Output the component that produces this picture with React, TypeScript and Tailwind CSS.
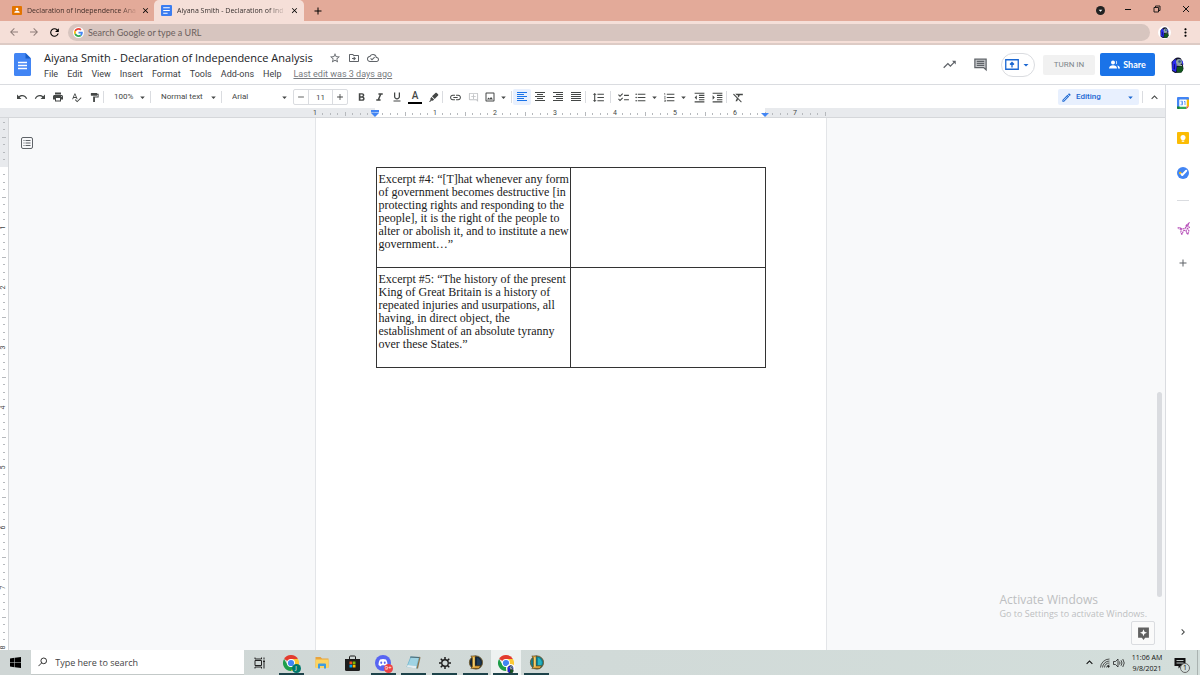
import React from "react";
import clsx from "clsx";
import {
  MdAdd,
  MdArrowBack,
  MdArrowDropDown,
  MdArrowForward,
  MdChecklist,
  MdChevronRight,
  MdClose,
  MdFormatBold,
  MdFormatClear,
  MdFormatIndentDecrease,
  MdFormatIndentIncrease,
  MdFormatItalic,
  MdFormatLineSpacing,
  MdFormatListBulleted,
  MdFormatListNumbered,
  MdFormatPaint,
  MdFormatUnderlined,
  MdKeyboardArrowUp,
  MdLink,
  MdMoreVert,
  MdOutlineAddComment,
  MdOutlineCloudDone,
  MdOutlineDriveFileMove,
  MdOutlineEdit,
  MdOutlineImage,
  MdPrint,
  MdRedo,
  MdRefresh,
  MdRemove,
  MdSpellcheck,
  MdStarBorder,
  MdTrendingUp,
  MdUndo,
} from "react-icons/md";

const menus = ["File", "Edit", "View", "Insert", "Format", "Tools", "Add-ons", "Help"];

/* ---------- drawings ---------- */

const ClassroomIcon = () => (
  <svg viewBox="0 0 20 18" className="h-[9px] w-[10px] shrink-0">
    <rect width="20" height="18" rx="2" fill="#e37400" />
    <circle cx="10" cy="6" r="2.6" fill="#fff" />
    <path d="M4.500 13.500c0-3 3-4 5.500-4s5.500 1 5.500 4z" fill="#fff" />
  </svg>
);

const DocsFavicon = () => (
  <svg viewBox="0 0 20 20" className="size-[11px] shrink-0">
    <rect width="20" height="20" rx="2" fill="#3b7df0" />
    <path d="M4 5h12M4 10h12M4 15h8" stroke="#fff" strokeWidth="2.200" />
  </svg>
);

const GoogleG = () => (
  <svg viewBox="0 0 48 48" className="size-[9px]">
    <path fill="#EA4335" d="M24 9.500c3.540 0 6.710 1.220 9.210 3.600l6.850-6.850C35.900 2.380 30.470 0 24 0 14.620 0 6.510 5.380 2.560 13.220l7.980 6.190C12.430 13.720 17.740 9.500 24 9.500z" />
    <path fill="#4285F4" d="M46.980 24.550c0-1.570-.15-3.090-.38-4.550H24v9.020h12.940c-.58 2.960-2.260 5.480-4.780 7.180l7.730 6c4.510-4.180 7.090-10.360 7.090-17.650z" />
    <path fill="#FBBC05" d="M10.530 28.590c-.48-1.450-.76-2.990-.76-4.590s.27-3.140.76-4.590l-7.980-6.190C.92 16.460 0 20.120 0 24c0 3.880.92 7.540 2.560 10.780l7.970-6.190z" />
    <path fill="#34A853" d="M24 48c6.480 0 11.930-2.130 15.890-5.810l-7.730-6c-2.150 1.450-4.920 2.300-8.160 2.300-6.260 0-11.570-4.220-13.470-9.910l-7.980 6.190C6.510 42.620 14.620 48 24 48z" />
  </svg>
);

const DocsLogo = () => (
  <svg viewBox="0 0 34 46" className="h-[23px] w-[17px] shrink-0">
    <path d="M3 0h20l11 11v32a3 3 0 0 1-3 3H3a3 3 0 0 1-3-3V3a3 3 0 0 1 3-3z" fill="#4285f4" />
    <path d="M23 0l11 11H23z" fill="#1a5fc8" />
    <path d="M8 19h18M8 25h18M8 31h18" stroke="#fff" strokeWidth="2.600" />
  </svg>
);

const Backpack = ({ className }: { className?: string }) => (
  <svg viewBox="0 0 26 32" className={className}>
    <path d="M8 3c3-3 9-3 12 0l3 7 2 14-4 7-13 1-6-4-1-18z" fill="#12122e" />
    <path d="M3 9l6-5 3 9-2 17-8-4z" fill="#2b2bf0" />
    <path d="M6 15l2-2v12l-3-1z" fill="#101080" />
    <path d="M12 20l11-2 1 9-4 4-8 0z" fill="#14561d" />
    <circle cx="16" cy="10" r="6" fill="#8fa3a6" />
    <circle cx="17" cy="9" r="2.500" fill="#2d5a86" />
    <path d="M11 16l11 1" stroke="#b9c6c2" strokeWidth="2" />
    <path d="M22 7l2 8" stroke="#2b2bf0" strokeWidth="2" />
  </svg>
);

const CommentIcon = () => (
  <svg viewBox="0 0 24 24" className="size-[15px]" fill="#c9cbce" stroke="#5f6368" strokeWidth="2">
    <path d="M3 3.500h18v17l-4-3.500H3z" />
    <path d="M6 7h12M6 10.200h12M6 13.400h12" strokeWidth="1.800" />
  </svg>
);

const HighlightPen = () => (
  <svg viewBox="0 0 24 24" className="size-[11px]" fill="#444746">
    <path d="M19 2l3 3c.8.800.8 2 0 2.800l-7.500 7.500-5.800-5.800L16.200 2c.800-.800 2-.800 2.800 0z" />
    <path d="M7.500 10.700l5.800 5.800-2.800 2.500-2.500-.500L5 21.500H2l3.500-4-.500-3z" />
  </svg>
);

// bars are [x, width] pairs, one per text line
const AlignIcon = ({ bars }: { bars: number[][] }) => (
  <svg viewBox="0 0 10 10" className="size-2.5" fill="currentColor">
    {bars.map(([x, w], i) => (
      <rect key={i} x={x} y={i * 2} width={w} height="1" />
    ))}
  </svg>
);

const CalendarIcon = () => (
  <svg viewBox="0 0 24 24" className="size-3">
    <path d="M2 0h20a2 2 0 0 1 2 2v4H0V2a2 2 0 0 1 2-2z" fill="#4285f4" />
    <path d="M0 5h5v19H2a2 2 0 0 1-2-2z" fill="#4285f4" />
    <path d="M19 5h5v14h-5z" fill="#fbbc04" />
    <path d="M4 19h15v5H4z" fill="#34a853" />
    <path d="M0 19h5v5H2a2 2 0 0 1-2-2z" fill="#188038" />
    <path d="M19 19h5l-5 5z" fill="#ea4335" />
    <path d="M5 5h14v14H5z" fill="#fff" />
    <path d="M7 8.500h4v7H7M8 12h3M14 9.500l2-1v7.500" fill="none" stroke="#4285f4" strokeWidth="1.600" />
  </svg>
);

const KeepIcon = () => (
  <svg viewBox="0 0 24 24" className="size-3">
    <rect width="24" height="24" rx="2" fill="#fbbc04" />
    <circle cx="12" cy="11" r="5" fill="#fff" />
    <path d="M9.500 14h5v3h-5zM9.500 18h5v1.500h-5z" fill="#fff" />
  </svg>
);

const TasksIcon = () => (
  <svg viewBox="0 0 24 24" className="size-3">
    <circle cx="12" cy="12" r="12" fill="#4285f4" />
    <path d="M10.500 16l8-8.500" stroke="#fff" strokeWidth="4" strokeLinecap="round" />
    <circle cx="6.500" cy="12" r="2.500" fill="#fbbc04" />
    <path d="M8.500 14l2 2" stroke="#fff" strokeWidth="3.500" strokeLinecap="round" />
  </svg>
);

const AddonIcon = () => (
  <svg viewBox="0 0 24 24" className="size-[13px]" fill="none" stroke="#b750b9" strokeWidth="2">
    <path d="M1 11l4-1 4 3 6-1 2-6 5-4-2 5 3 3-4 2 3 4-2 7-3-4 0-4-5 1-3 7-2-4 1-5-5-2M22 2l-5 8" strokeDasharray="4 1" />
  </svg>
);

const ChromeIcon = () => (
  <svg viewBox="0 0 32 32" className="size-4">
    <path d="M16 16L2.140 8A16 16 0 0 1 29.860 8z" fill="#e33b2e" />
    <path d="M16 16V8h13.860A16 16 0 0 1 16 32z" fill="#fcc934" />
    <path d="M16 16l6.900 4L16 32A16 16 0 0 1 2.140 8l7 12z" fill="#1e9e4a" />
    <circle cx="16" cy="16" r="8" fill="#fff" />
    <circle cx="16" cy="16" r="6.200" fill="#4285f4" />
  </svg>
);

const FolderIcon = () => (
  <svg viewBox="0 0 28 26" className="h-[13px] w-[14px]">
    <path d="M1 2h10l3 3h13v18H1z" fill="#e8a33d" />
    <path d="M1 7h26v17H1z" fill="#fcd462" />
    <path d="M6 25v-8a2 2 0 0 1 2-2h12a2 2 0 0 1 2 2v8h-4v-5h-8v5z" fill="#3f9be0" />
  </svg>
);

const StoreIcon = () => (
  <svg viewBox="0 0 30 32" className="h-4 w-[15px]">
    <path d="M9 9V4a2 2 0 0 1 2-2h8a2 2 0 0 1 2 2v5" fill="none" stroke="#1d1d1d" strokeWidth="2" />
    <path d="M0 8h30v21a3 3 0 0 1-3 3H3a3 3 0 0 1-3-3z" fill="#1d1d1d" />
    <path d="M9 13h5.500v5.500H9z" fill="#f25022" />
    <path d="M15.500 13H21v5.500h-5.500z" fill="#7fba00" />
    <path d="M9 19.500h5.500V25H9z" fill="#00a4ef" />
    <path d="M15.500 19.500H21V25h-5.500z" fill="#ffb900" />
  </svg>
);

const DiscordIcon = () => (
  <svg viewBox="0 0 32 32" className="size-4">
    <circle cx="16" cy="16" r="16" fill="#5865f2" />
    <path d="M10 9c4-1.500 8-1.500 12 0 2 3 3 7 3 11-2 2-4 2.500-5 2.500l-1-2h-6l-1 2c-1 0-3-.5-5-2.500 0-4 1-8 3-11z" fill="#fff" />
    <ellipse cx="12.500" cy="15.500" rx="2" ry="2.300" fill="#5865f2" />
    <ellipse cx="19.500" cy="15.500" rx="2" ry="2.300" fill="#5865f2" />
  </svg>
);

const NotepadIcon = () => (
  <svg viewBox="0 0 30 30" className="size-[15px]">
    <path d="M9 3l18 1-5 23-21-3z" fill="#6fb5cd" />
    <path d="M10 5l15 1-4 16-17-2z" fill="#9fd3e3" />
    <path d="M3 20l18 2-1 5-18-3z" fill="#e8eef0" />
    <path d="M27 3l2 2-5 22-3 0z" fill="#8a7550" />
    <path d="M9 3l18 1v2L8 5z" fill="#4b6670" />
  </svg>
);

const GearIcon = () => (
  <svg viewBox="0 0 24 24" className="size-3" fill="none" stroke="#1c1c1c">
    <circle cx="12" cy="12" r="6.500" strokeWidth="2.600" />
    <path d="M12 0v5M12 19v5M0 12h5M19 12h5M3.500 3.500l3.500 3.500M17 17l3.500 3.500M20.500 3.500L17 7M7 17l-3.500 3.500" strokeWidth="3" />
  </svg>
);

const LeagueIcon = ({ dark }: { dark?: boolean }) => (
  <svg viewBox="0 0 32 32" className="size-[15px]">
    <circle cx="17" cy="16" r="14" fill={dark ? "#12263a" : "#0f7f93"} stroke="#6e5a2c" strokeWidth="2" />
    <path d="M19 6a11 11 0 0 1 7 16h-7z" fill={dark ? "#1d3b55" : "#24b3c0"} />
    <path d="M6 2h11l-2 3v18h12l-4 6H6l3-4V6z" fill="#d9a03a" stroke="#3b2a0a" />
    <path d="M11 5h3v20h-3z" fill="#f5d77a" />
  </svg>
);

const TaskViewIcon = () => (
  <svg viewBox="0 0 24 24" className="size-3" fill="none" stroke="#222" strokeWidth="2">
    <path d="M2 7h13v10H2zM2 1v3h13V1M2 23v-3h13v3M20 1v4M20 12v11" />
    <path d="M18 7h4v4h-4z" fill="#222" stroke="none" />
  </svg>
);

/* ---------- browser window ---------- */

type TabProps = { icon: React.ReactNode; title: string; active?: boolean };

const BrowserTab = ({ icon, title, active }: TabProps) => (
  <div
    className={clsx(
      "flex items-center gap-[5px] pr-[5px]",
      active ? "w-[150px] rounded-t-[5px] bg-[#f5dfd8] pl-[7px]" : "w-[154px] pl-3"
    )}
  >
    {icon}
    <span
      className={clsx(
        "whitespace-nowrap bg-linear-to-r from-85% to-100% bg-clip-text font-['Open_Sans',sans-serif] text-[7px] leading-4 text-transparent",
        active ? "from-[#2f2928] to-[#e5cfc8]" : "from-[#3d2a25] to-[#d39a89]"
      )}
    >
      {title}
    </span>
    <button aria-label="Close tab" className="ml-auto text-black">
      <MdClose size={9} />
    </button>
  </div>
);

const BrowserChrome = () => (
  <div className="font-[Lato,sans-serif]">
    <div className="flex h-[21px] bg-[#e3aa99]">
      <BrowserTab icon={<ClassroomIcon />} title="Declaration of Independence Ana" />
      <BrowserTab icon={<DocsFavicon />} title="Aiyana Smith - Declaration of Ind" active />
      <button aria-label="New tab" className="px-2 text-black">
        <MdAdd size={12} />
      </button>
      <div className="ml-auto flex items-center">
        <button aria-label="Tab search" className="mr-2 flex size-[9px] items-center justify-center rounded-full bg-[#222] text-white">
          <MdArrowDropDown size={9} />
        </button>
        <button aria-label="Minimize" className="flex w-[29px] justify-center pb-[3px]">
          <svg viewBox="0 0 8 8" className="size-2" stroke="#111">
            <path d="M1 4.500h6" />
          </svg>
        </button>
        <button aria-label="Restore" className="flex w-[29px] justify-center pb-[3px]">
          <svg viewBox="0 0 16 16" className="size-2" fill="none" stroke="#111" strokeWidth="1.800">
            <path d="M2 5h9v9H2zM5 5V2h9v9h-3" />
          </svg>
        </button>
        <button aria-label="Close" className="flex w-[29px] justify-center pb-[3px]">
          <svg viewBox="0 0 8 8" className="size-2" stroke="#111">
            <path d="M1 1l6 6M7 1L1 7" />
          </svg>
        </button>
      </div>
    </div>
    <div className="flex h-6 items-center border-b-2 border-[#ddcbc5] bg-[#f5dfd8] px-2">
      <button aria-label="Back" className="w-5 text-[#8f7f7a]">
        <MdArrowBack size={12} />
      </button>
      <button aria-label="Forward" className="w-5 text-[#8f7f7a]">
        <MdArrowForward size={12} />
      </button>
      <button aria-label="Reload" className="w-5 text-black">
        <MdRefresh size={13} />
      </button>
      <label className="flex h-[17px] flex-1 items-center gap-1 rounded-full bg-[#d7c5bf] pl-[5px]">
        <span className="flex size-[11px] items-center justify-center rounded-full bg-white">
          <GoogleG />
        </span>
        <input
          type="text"
          aria-label="Address"
          placeholder="Search Google or type a URL"
          className="flex-1 bg-transparent pt-px text-[9px] outline-none placeholder:text-[#6b605d]"
        />
      </label>
      <button aria-label="Profile" className="ml-2 flex size-[13px] items-center justify-center rounded-full bg-white">
        <Backpack className="h-[11px] w-[9px]" />
      </button>
      <button aria-label="Chrome menu" className="ml-2 text-black">
        <MdMoreVert size={13} />
      </button>
    </div>
  </div>
);

/* ---------- docs header and toolbar ---------- */

const DocsHeader = () => (
  <header className="flex h-10 items-center border-b border-[#dadce0] bg-white pl-3.5 pr-4 text-[#3c4043]">
    <DocsLogo />
    <div className="ml-[13px] flex flex-col pt-[3px]">
      <div className="flex items-center">
        <h1 className="whitespace-nowrap font-['Open_Sans',sans-serif] text-[11px] leading-4 text-[#202124]">
          Aiyana Smith - Declaration of Independence Analysis
        </h1>
        <div className="ml-4 flex gap-[7px] text-[#5f6368]">
          <button aria-label="Star"><MdStarBorder size={12} /></button>
          <button aria-label="Move"><MdOutlineDriveFileMove size={12} /></button>
          <button aria-label="Document status"><MdOutlineCloudDone size={12} /></button>
        </div>
      </div>
      <nav className="flex gap-[9px] whitespace-nowrap text-[9px] leading-4">
        {menus.map((m) => (
          <button key={m}>{m}</button>
        ))}
        <a href="#history" className="ml-[3px] text-[#777b80] underline">
          Last edit was 3 days ago
        </a>
      </nav>
    </div>
    <div className="ml-auto flex items-center">
      <button aria-label="Activity" className="text-[#5f6368]">
        <MdTrendingUp size={15} />
      </button>
      <button aria-label="Comments" className="ml-4">
        <CommentIcon />
      </button>
      <button aria-label="Present" className="ml-[13px] flex h-6 w-[34px] items-center justify-center gap-px rounded-full border border-[#dadce0] text-[#1a67d2]">
        <svg viewBox="0 0 28 22" className="h-[11px] w-[14px]" fill="none" stroke="currentColor" strokeWidth="2.600">
          <path d="M1.500 1.500h25v19h-25zM14 17V8M10 11l4-4 4 4" />
        </svg>
        <MdArrowDropDown size={12} />
      </button>
      <button className="ml-2 h-5 w-[52px] rounded-xs bg-[#f1f1f1] text-[8px] text-[#80868b]">TURN IN</button>
      <button className="ml-[5px] flex h-[23px] w-[55px] items-center justify-center gap-[3px] rounded-xs bg-[#1a73e8] font-[Lato,sans-serif] text-[9px] font-bold text-white">
        <svg viewBox="0 0 22 18" className="h-[9px] w-[11px]" fill="#fff">
          <circle cx="8" cy="5" r="4" />
          <path d="M0 17c0-5 4-6.500 8-6.500s8 1.500 8 6.500z" />
          <path d="M13.500 1.200a4 4 0 0 1 0 7.600c1.500-2.400 1.500-5.200 0-7.600zM16 11c3 .5 6 2 6 6h-4c0-2.500-.5-4.500-2-6z" />
        </svg>
        Share
      </button>
      <button aria-label="Account" className="ml-4">
        <Backpack className="h-4 w-[13px]" />
      </button>
    </div>
  </header>
);

type ToolProps = { label: string; active?: boolean; caret?: boolean; children: React.ReactNode };

const Tool = ({ label, active, caret, children }: ToolProps) => (
  <button
    aria-label={label}
    className={clsx(
      "flex h-4 items-center justify-center rounded-xs",
      caret ? "w-[29px]" : "w-[18px]",
      active && "bg-[#e8f0fe] text-[#1a73e8]"
    )}
  >
    {children}
    {caret && <MdArrowDropDown size={11} className="ml-0.5" />}
  </button>
);

const Sep = () => <span className="h-3 w-px bg-[#dadce0]" />;

const Picker = ({ label, value, className }: { label: string; value: string; className: string }) => (
  <div className={clsx("relative flex items-center", className)}>
    <select aria-label={label} className="w-full appearance-none bg-transparent pl-2.5 text-[8px] outline-none">
      <option>{value}</option>
    </select>
    <MdArrowDropDown size={11} className="pointer-events-none absolute right-0.5" />
  </div>
);

const Toolbar = () => (
  <div className="flex h-[23px] items-center bg-white pl-[13px] pr-1 pt-px text-[#444746]">
    <Tool label="Undo"><MdUndo size={12} /></Tool>
    <Tool label="Redo"><MdRedo size={12} /></Tool>
    <Tool label="Print"><MdPrint size={12} /></Tool>
    <Tool label="Spelling"><MdSpellcheck size={11} /></Tool>
    <Tool label="Paint format"><MdFormatPaint size={11} /></Tool>
    <Sep />
    <Picker label="Zoom" value="100%" className="w-[46px]" />
    <Sep />
    <Picker label="Styles" value="Normal text" className="w-[70px]" />
    <Sep />
    <Picker label="Font" value="Arial" className="w-[70px]" />
    <div className="mr-1 ml-px flex h-4 items-center rounded-xs border border-[#dadce0]">
      <button aria-label="Decrease font size" className="flex w-3.5 justify-center"><MdRemove size={10} /></button>
      <input
        aria-label="Font size"
        defaultValue="11"
        className="h-3.5 w-[25px] border-x border-[#dadce0] text-center text-[8px] outline-none"
      />
      <button aria-label="Increase font size" className="flex w-3.5 justify-center"><MdAdd size={10} /></button>
    </div>
    <Tool label="Bold"><MdFormatBold size={13} /></Tool>
    <Tool label="Italic"><MdFormatItalic size={13} /></Tool>
    <Tool label="Underline"><MdFormatUnderlined size={12} /></Tool>
    <Tool label="Text color">
      <span className="w-3.5 border-b-2 border-black text-center text-[10px] font-medium leading-3">A</span>
    </Tool>
    <Tool label="Highlight color"><HighlightPen /></Tool>
    <Sep />
    <span className="w-[3px]" />
    <Tool label="Insert link"><MdLink size={13} /></Tool>
    <span className="flex text-[#c0c2c5]">
      <Tool label="Add comment"><MdOutlineAddComment size={11} /></Tool>
    </span>
    <Tool label="Insert image" caret><MdOutlineImage size={12} /></Tool>
    <Sep />
    <span className="w-px" />
    <Tool label="Left align" active><AlignIcon bars={[[0, 10], [0, 7], [0, 10], [0, 7], [0, 10]]} /></Tool>
    <Tool label="Center align"><AlignIcon bars={[[0, 10], [2, 6], [0, 10], [2, 6], [0, 10]]} /></Tool>
    <Tool label="Right align"><AlignIcon bars={[[0, 10], [3, 7], [0, 10], [3, 7], [0, 10]]} /></Tool>
    <Tool label="Justify"><AlignIcon bars={[[0, 10], [0, 10], [0, 10], [0, 10], [0, 10]]} /></Tool>
    <Sep />
    <span className="flex px-[3px]">
      <Tool label="Line spacing"><MdFormatLineSpacing size={13} /></Tool>
    </span>
    <Sep />
    <span className="w-[3px]" />
    <Tool label="Checklist"><MdChecklist size={13} /></Tool>
    <Tool label="Bulleted list" caret><MdFormatListBulleted size={13} /></Tool>
    <Tool label="Numbered list" caret><MdFormatListNumbered size={13} /></Tool>
    <Tool label="Decrease indent"><MdFormatIndentDecrease size={13} /></Tool>
    <Tool label="Increase indent"><MdFormatIndentIncrease size={13} /></Tool>
    <Sep />
    <span className="w-0.5" />
    <Tool label="Clear formatting"><MdFormatClear size={13} /></Tool>
    <button className="ml-auto flex h-4 w-[81px] items-center gap-1 rounded-xs bg-[#e8f0fe] px-[3px] text-[8px] font-medium text-[#1a67d2]">
      <MdOutlineEdit size={11} />
      Editing
      <MdArrowDropDown size={11} className="ml-auto" />
    </button>
    <span className="mr-[5px] ml-[3px] h-3 w-px bg-[#dadce0]" />
    <button aria-label="Hide menus"><MdKeyboardArrowUp size={13} /></button>
  </div>
);

/* ---------- rulers ---------- */

const Tick = ({ step, vertical }: { step: number; vertical?: boolean }) => {
  const box = vertical ? "h-0 w-full" : "h-full w-0";
  let mark = <i className={clsx("shrink-0 bg-[#b6b9bd]", vertical ? "h-px w-0.5" : "h-0.5 w-px")} />;
  if (step % 8 === 0) {
    mark = (
      <span className={clsx("text-[7px] leading-none text-[#444746]", vertical && "-rotate-90")}>
        {step === 0 ? "" : Math.abs(step / 8)}
      </span>
    );
  } else if (step % 4 === 0) {
    mark = <i className={clsx("shrink-0 bg-[#b6b9bd]", vertical ? "h-px w-1" : "h-1 w-px")} />;
  }
  return <span className={clsx("flex items-center justify-center", box)}>{mark}</span>;
};

const range = (from: number, to: number) => Array.from({ length: to - from + 1 }, (_, i) => from + i);

const HorizontalRuler = () => (
  <div className="flex h-2.5 justify-center border-b border-[#d5d7da] bg-[#e8eaed] pr-[25px]">
    <div className="relative flex w-[510px] justify-between bg-linear-to-r from-[#e8eaed] from-[60px] via-white via-[60px] to-white pt-0.5">
      <span className="absolute top-0 right-0 h-full w-[60px] bg-[#e8eaed]" />
      {range(-8, 60).map((n) => (
        <span key={n} className="relative flex">
          <Tick step={n} />
        </span>
      ))}
      <svg viewBox="0 0 8 8" className="absolute top-0.5 left-14 size-2" fill="#4285f4">
        <path d="M0 0h8v2.500H0zM0 3h8L4 7z" />
      </svg>
      <svg viewBox="0 0 8 8" className="absolute top-0.5 right-14 size-2" fill="#4285f4">
        <path d="M0 3h8L4 7z" />
      </svg>
    </div>
  </div>
);

const VerticalRuler = () => (
  <div className="relative w-[9px] shrink-0 overflow-hidden border-r border-[#d5d7da] bg-white">
    <div className="absolute top-0 h-[49px] w-full bg-[#e8eaed]" />
    <div className="relative mt-1 flex h-[525px] flex-col justify-between">
      {range(-6, 64).map((n) => (
        <Tick key={n} step={n} vertical />
      ))}
    </div>
  </div>
);

/* ---------- document ---------- */

const excerpts = [
  "Excerpt #4: “[T]hat whenever any form of government becomes destructive [in protecting rights and responding to the people], it is the right of the people to alter or abolish it, and to institute a new government…”",
  "Excerpt #5: “The history of the present King of Great Britain is a history of repeated injuries and usurpations, all having, in direct object, the establishment of an absolute tyranny over these States.”",
];

const Page = () => (
  <div className="w-[512px] border-x border-[#e3e5e8] bg-white px-[60px] pt-[49px] font-['Liberation_Serif',serif]">
    <table className="w-full table-fixed border-collapse text-black">
      <tbody>
        {excerpts.map((text) => (
          <tr key={text} className="h-[100px]">
            <td className="border border-[#333] pt-[5px] pl-0.5 align-top text-[12px] leading-[13px] text-[#222]">{text}</td>
            <td className="border border-[#333]" />
          </tr>
        ))}
      </tbody>
    </table>
  </div>
);

const Canvas = () => (
  <div className="relative flex min-h-0 flex-1 overflow-hidden bg-[#f8f9fa]">
    <VerticalRuler />
    <div className="flex flex-1 justify-center pr-[25px]">
      <Page />
    </div>
    <div className="w-2 pt-[274px]">
      <div className="h-[205px] w-[5px] rounded-full bg-[#dadce0]" />
    </div>
    <button aria-label="Show document outline" className="absolute top-[19px] left-[21px] text-[#5f6368]">
      <svg viewBox="0 0 24 24" className="size-3" fill="none" stroke="currentColor" strokeWidth="2">
        <rect x="1" y="1" width="22" height="22" rx="3" />
        <path d="M5 7h2M9 7h10M5 12h2M9 12h10M5 17h2M9 17h10" />
      </svg>
    </button>
    <div className="absolute right-[18px] bottom-[30px] font-['Open_Sans',sans-serif] whitespace-nowrap text-[#bdbfc1]">
      <p className="text-[12px] leading-4">Activate Windows</p>
      <p className="text-[9px] leading-3">Go to Settings to activate Windows.</p>
    </div>
    <button aria-label="Explore" className="absolute right-2.5 bottom-[5px] flex size-6 items-center justify-center rounded-xs border border-[#dadce0] bg-[#fafafa]">
      <svg viewBox="0 0 24 24" className="size-[13px]">
        <path d="M2 1h20v19h-7l-3 4-3-4H2z" fill="#616161" />
        <path d="M12 4l1.800 4.700L18.500 10.500l-4.700 1.800L12 17l-1.800-4.700-4.700-1.800 4.700-1.800z" fill="#fff" />
      </svg>
    </button>
  </div>
);

const SidePanel = () => (
  <aside className="flex w-[35px] flex-col items-center border-l border-[#dadce0] bg-white pt-3">
    <div className="flex flex-col items-center gap-[23px]">
      <button aria-label="Calendar"><CalendarIcon /></button>
      <button aria-label="Keep"><KeepIcon /></button>
      <button aria-label="Tasks"><TasksIcon /></button>
    </div>
    <hr className="my-[21px] w-3 border-[#dadce0]" />
    <div className="flex flex-col items-center gap-[22px] text-[#5f6368]">
      <button aria-label="Add-on"><AddonIcon /></button>
      <button aria-label="Get add-ons"><MdAdd size={12} /></button>
    </div>
    <button aria-label="Hide side panel" className="mt-auto mb-3 text-[#444746]">
      <MdChevronRight size={12} />
    </button>
  </aside>
);

/* ---------- taskbar ---------- */

const Badge = ({ className, children }: { className: string; children: React.ReactNode }) => (
  <span className={clsx("absolute right-1.5 bottom-0 flex size-[9px] items-center justify-center rounded-full text-[6px] text-white", className)}>
    {children}
  </span>
);

const apps = [
  { name: "Chrome", running: true, icon: <ChromeIcon />, badge: <Badge className="bg-[#00796b]">J</Badge> },
  { name: "File Explorer", icon: <FolderIcon /> },
  { name: "Microsoft Store", icon: <StoreIcon /> },
  { name: "Discord", running: true, icon: <DiscordIcon />, badge: <Badge className="bg-[#ed4245]">9+</Badge> },
  { name: "Notepad", running: true, icon: <NotepadIcon /> },
  { name: "Settings", running: true, icon: <GearIcon /> },
  { name: "League of Legends", running: true, icon: <LeagueIcon dark /> },
  {
    name: "Chrome window",
    running: true,
    active: true,
    icon: <ChromeIcon />,
    badge: <Badge className="bg-white"><Backpack className="h-2 w-[7px]" /></Badge>,
  },
  { name: "League client", running: true, icon: <LeagueIcon /> },
];

const Taskbar = () => (
  <footer className="flex h-[25px] bg-linear-to-r from-[#cfd6d5] to-[#d3dedb] font-['Open_Sans',sans-serif] text-[#111]">
    <button aria-label="Start" className="flex w-[31px] items-center justify-center">
      <svg viewBox="0 0 22 22" className="size-[11px]" fill="#000">
        <path d="M0 3l9-1.300v8.800H0zM10 1.500L22 0v10.500H10zM0 11.500h9v8.800L0 19zM10 11.500h12V22l-12-1.500z" />
      </svg>
    </button>
    <label className="flex w-[213px] items-center gap-2 border-b border-[#c3c9c8] bg-white pl-[7px]">
      <svg viewBox="0 0 20 20" className="size-2.5" fill="none" stroke="#222" strokeWidth="2">
        <circle cx="12.500" cy="7.500" r="6.200" />
        <path d="M8 12l-7 7" />
      </svg>
      <input type="text" aria-label="Search" placeholder="Type here to search" className="w-full pt-px text-[9px] outline-none placeholder:text-[#444]" />
    </label>
    <button aria-label="Task view" className="flex w-8 items-center justify-center">
      <TaskViewIcon />
    </button>
    <div className="grid w-[276px] grid-cols-9">
      {apps.map((app) => (
        <button
          key={app.name}
          aria-label={app.name}
          className={clsx("relative flex flex-col items-center", app.active && "bg-[#eef2f1]")}
        >
          <span className="relative flex w-full flex-1 items-center justify-center pt-0.5">
            {app.icon}
            {app.badge}
          </span>
          <span className={clsx("h-0.5 w-[25px]", app.running && "bg-[#1d434a]")} />
        </button>
      ))}
    </div>
    <div className="ml-auto flex items-center">
      <button aria-label="Hidden icons"><MdKeyboardArrowUp size={13} /></button>
      <svg viewBox="0 0 20 20" className="ml-1 size-2.5" fill="none" stroke="#222" strokeWidth="1.500">
        <path d="M1 19A18 18 0 0 1 19 2M5 19A14 14 0 0 1 19 6M9 19A10 10 0 0 1 19 10M13 19a6 6 0 0 1 6-5" />
        <circle cx="17" cy="17" r="1.500" fill="#222" />
      </svg>
      <svg viewBox="0 0 24 20" className="ml-[3px] h-2.5 w-3" fill="none" stroke="#222" strokeWidth="1.600">
        <path d="M1 7h4l5-5v16l-5-5H1zM13 7q2 3 0 6M16 4.500q4 5.500 0 11M19.500 2q6 8 0 16" />
      </svg>
      <div className="ml-[3px] w-[38px] text-center text-[7px] leading-[11px]">
        <p className="whitespace-nowrap">11:06 AM</p>
        <p>9/8/2021</p>
      </div>
      <button aria-label="Notifications" className="relative mr-[7px] ml-2 flex w-4">
        <svg viewBox="0 0 24 24" className="size-3">
          <path d="M1 2h22v16h-9l-5 5v-5H1z" fill="#111" />
          <path d="M5 7h14M5 12h14" stroke="#d3dedb" strokeWidth="1.800" />
        </svg>
        <span className="absolute right-0 -bottom-1 flex size-2.5 items-center justify-center rounded-full border border-[#666] bg-[#d3dedb] text-[7px] leading-none">1</span>
      </button>
      <span className="h-full w-[3px] border-l border-[#aab3b1]" />
    </div>
  </footer>
);

const App: React.FC = () => (
  <div className="flex h-screen flex-col overflow-hidden bg-white font-[Roboto,sans-serif]">
    <BrowserChrome />
    <DocsHeader />
    <div className="flex min-h-0 flex-1">
      <main className="flex min-w-0 flex-1 flex-col">
        <Toolbar />
        <HorizontalRuler />
        <Canvas />
      </main>
      <SidePanel />
    </div>
    <Taskbar />
  </div>
);

export default App;
